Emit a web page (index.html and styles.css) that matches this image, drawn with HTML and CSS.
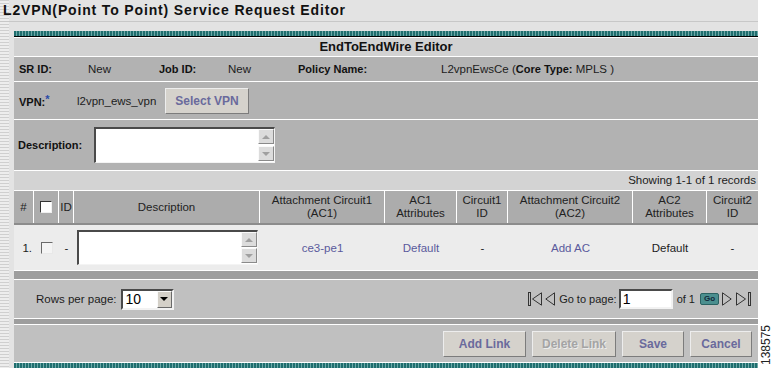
FILE: index.html
```html
<!DOCTYPE html>
<html lang="en">
<head>
    <meta charset="UTF-8">
    <title>L2VPN(Point To Point) Service Request Editor</title>
    <link rel="stylesheet" href="styles.css">
</head>
<body>
<div class="page">
    <div class="main">
        <h1 class="title">L2VPN(Point To Point) Service Request Editor</h1>

        <div class="panel">
            <div class="stripe top"></div>
            <div class="editor-head">EndToEndWire Editor</div>

            <div class="info-row">
                <b>SR ID:</b>
                <span>New</span>
                <b>Job ID:</b>
                <span>New</span>
                <b>Policy Name:</b>
                <span>L2vpnEwsCe (<b>Core Type:</b> MPLS )</span>
            </div>

            <div class="vpn-row">
                <b class="vpn-label">VPN:<sup>*</sup></b>
                <span class="vpn-value">l2vpn_ews_vpn</span>
                <button class="btn select-vpn">Select VPN</button>
            </div>

            <div class="desc-row">
                <b class="desc-label">Description:</b>
                <div class="scrollbox">
                    <div class="scroll-btns">
                        <span class="sb up"></span>
                        <span class="sb down"></span>
                    </div>
                </div>
            </div>

            <div class="showing">Showing 1-1 of 1 records</div>

            <div class="list-head">
                <div>#</div>
                <div><span class="cb head-cb"></span></div>
                <div>ID</div>
                <div>Description</div>
                <div>Attachment Circuit1<br>(AC1)</div>
                <div>AC1<br>Attributes</div>
                <div>Circuit1<br>ID</div>
                <div>Attachment Circuit2<br>(AC2)</div>
                <div>AC2<br>Attributes</div>
                <div>Circuit2<br>ID</div>
            </div>
            <div class="list-row">
                <div class="num">1.</div>
                <div><span class="cb"></span></div>
                <div>-</div>
                <div class="desc-cell">
                    <div class="scrollbox">
                        <div class="scroll-btns">
                            <span class="sb up"></span>
                            <span class="sb down"></span>
                        </div>
                    </div>
                </div>
                <div><a href="#">ce3-pe1</a></div>
                <div><a href="#">Default</a></div>
                <div>-</div>
                <div><a href="#">Add AC</a></div>
                <div>Default</div>
                <div>-</div>
            </div>

            <div class="band"></div>

            <div class="pager">
                <div class="rows-per-page">
                    <span>Rows per page:</span>
                    <div class="select">
                        <span class="select-val">10</span>
                        <span class="select-arrow"></span>
                    </div>
                </div>
                <div class="goto">
                    <svg class="nav" width="14" height="14" viewBox="0 0 14 14">
                        <rect x="0.5" y="0.5" width="2" height="13" fill="none" stroke="#333"/>
                        <path d="M13.5 0.8 L4.5 7 L13.5 13.2 Z" fill="none" stroke="#333"/>
                    </svg>
                    <svg class="nav prev" width="10" height="14" viewBox="0 0 10 14">
                        <path d="M9.5 0.8 L0.8 7 L9.5 13.2 Z" fill="none" stroke="#333"/>
                    </svg>
                    <span class="goto-label">Go to page:</span>
                    <span class="page-input">1</span>
                    <span class="of">of 1</span>
                    <span class="go">Go</span>
                    <svg class="nav" width="10" height="14" viewBox="0 0 10 14">
                        <path d="M0.5 0.8 L9.2 7 L0.5 13.2 Z" fill="none" stroke="#333"/>
                    </svg>
                    <svg class="nav last" width="16" height="14" viewBox="0 0 16 14">
                        <path d="M0.5 0.8 L9.5 7 L0.5 13.2 Z" fill="none" stroke="#333"/>
                        <rect x="12.5" y="0.5" width="2" height="13" fill="none" stroke="#333"/>
                    </svg>
                </div>
            </div>

            <div class="band thin"></div>

            <div class="actions">
                <button class="btn add-link">Add Link</button>
                <button class="btn delete-link" disabled>Delete Link</button>
                <button class="btn save">Save</button>
                <button class="btn cancel">Cancel</button>
            </div>

            <div class="stripe"></div>
        </div>
    </div>
    <div class="side"><span>138575</span></div>
</div>
</body>
</html>
```

FILE: styles.css
```css
* {
    margin: 0;
    padding: 0;
    box-sizing: border-box;
}

body {
    font-family: 'Liberation Sans', Arial, sans-serif;
    font-size: 11.5px;
    color: #1c1c1c;
    background: #fff;
}

.page {
    display: flex;
    width: 773px;
    height: 368px;
    overflow: hidden;
}

.main {
    width: 758px;
    background-color: #e3e3e3;
    background-image: repeating-linear-gradient(180deg, #cfcfcf 0 1px, #ededed 1px 3px);
    background-size: 9px 100%;
    background-repeat: no-repeat;
}

.title {
    height: 22px;
    padding: 3px 0 0 3px;
    border-bottom: 1px solid #c8c8c8;
    font-size: 14px;
    line-height: 15px;
    letter-spacing: 0.85px;
    color: #111;
}

.panel {
    width: 744px;
    margin: 9px 0 0 14px;
}

.stripe {
    height: 5px;
    background: repeating-linear-gradient(90deg, #1f6e6e 0 2px, #6ea8a8 2px 3px);
}

.stripe.top {
    height: 6px;
    border-bottom: 1px solid #000;
}

.editor-head {
    height: 20px;
    background: #d2d2d2;
    border-top: 1px solid #fff;
    border-bottom: 1px solid #fff;
    text-align: center;
    font-weight: bold;
    font-size: 13px;
    line-height: 18px;
    color: #111;
}

.info-row {
    display: grid;
    grid-template-columns: 69px 71px 69px 70px 143px 1fr;
    align-items: center;
    height: 25px;
    padding-left: 5px;
    background: #b2b2b2;
    border-bottom: 1px solid #fff;
}

.info-row b,
.vpn-label,
.desc-label {
    font-size: 11px;
    color: #111;
}

.vpn-row {
    display: flex;
    align-items: center;
    height: 38px;
    padding-left: 5px;
    background: #b2b2b2;
    border-bottom: 1px solid #fff;
}

.vpn-label {
    width: 58px;
}

.vpn-label sup {
    color: #2a4aa8;
    font-size: 11px;
    vertical-align: 3px;
}

.vpn-value {
    width: 88px;
}

.desc-row {
    display: flex;
    align-items: center;
    height: 51px;
    padding-left: 4px;
    background: #b2b2b2;
    border-bottom: 1px solid #fff;
}

.desc-label {
    width: 76px;
}

/* fake textarea with scroll arrows */
.scrollbox {
    display: flex;
    justify-content: flex-end;
    width: 181px;
    height: 36px;
    background: #fff;
    border-top: 2px solid #4a4a4a;
    border-left: 2px solid #4a4a4a;
    border-right: 1px solid #f4f4f4;
    border-bottom: 1px solid #f4f4f4;
}

.scroll-btns {
    display: flex;
    flex-direction: column;
    justify-content: space-between;
    width: 16px;
    padding: 0 0 1px 0;
}

.sb {
    display: flex;
    align-items: center;
    justify-content: center;
    height: 15px;
    background: #dcdcdc;
    border: 1px solid;
    border-color: #fafafa #8a8a8a #8a8a8a #fafafa;
}

.sb::after {
    content: '';
    border-left: 4px solid transparent;
    border-right: 4px solid transparent;
}

.sb.up::after {
    border-bottom: 4px solid #a0a0a0;
}

.sb.down::after {
    border-top: 4px solid #a0a0a0;
}

.showing {
    height: 20px;
    padding-right: 2px;
    background: #d3d3d3;
    border-bottom: 1px solid #fff;
    text-align: right;
    line-height: 19px;
}

.list-head,
.list-row {
    display: grid;
    grid-template-columns: 20px 25px 15px 186px 125px 72px 51px 125px 74px 51px;
}

.list-head {
    height: 34px;
    background: #acacac;
    border-bottom: 2px solid #8c8c8c;
}

.list-head > div {
    display: flex;
    align-items: center;
    justify-content: center;
    border-right: 1px solid #fff;
    text-align: center;
    line-height: 13px;
    color: #222;
}

.list-head > div:last-child {
    border-right: none;
}

.list-row {
    height: 46px;
    background: #ececec;
    border-bottom: 1px solid #fff;
}

.list-row > div {
    display: flex;
    align-items: center;
    justify-content: center;
}

.list-row .num {
    justify-content: flex-end;
    padding-right: 2px;
}

.list-row .desc-cell {
    justify-content: flex-start;
    padding-left: 3px;
}

.list-row .scrollbox {
    height: 35px;
}

.list-row a {
    color: #5a5a9c;
    text-decoration: none;
}

.cb {
    display: inline-block;
    width: 12px;
    height: 12px;
    background: #f4f4f4;
    border: 1px solid;
    border-color: #6a6a6a #e8e8e8 #e8e8e8 #6a6a6a;
}

.head-cb {
    background: #fff;
    border-color: #333 #f0f0f0 #f0f0f0 #333;
}

.band {
    height: 9px;
    background: #9e9e9e;
    border-bottom: 1px solid #fff;
}

.band.thin {
    height: 6px;
}

.pager {
    display: flex;
    align-items: center;
    justify-content: space-between;
    height: 39px;
    padding: 0 6px 0 22px;
    background: #c0c0c0;
    border-bottom: 1px solid #fff;
}

.rows-per-page,
.goto {
    display: flex;
    align-items: center;
}

.rows-per-page span:first-child {
    margin-right: 4px;
}

.select {
    display: flex;
    width: 53px;
    height: 21px;
    background: #fff;
    border: 2px solid;
    border-color: #4a4a4a #f2f2f2 #f2f2f2 #4a4a4a;
}

.select-val {
    flex: 1;
    padding-left: 3px;
    font-size: 14px;
    line-height: 17px;
    color: #000;
}

.select-arrow {
    display: flex;
    align-items: center;
    justify-content: center;
    width: 15px;
    background: #d4d0c8;
    border: 1px solid;
    border-color: #fafafa #6a6a6a #6a6a6a #fafafa;
}

.select-arrow::after {
    content: '';
    border-left: 4px solid transparent;
    border-right: 4px solid transparent;
    border-top: 4px solid #000;
}

.nav.prev {
    margin: 0 4px 0 3px;
}

.nav.last {
    margin-left: 4px;
}

.goto-label,
.of {
    font-size: 11px;
}

.goto-label {
    margin-right: 2px;
}

.page-input {
    width: 54px;
    height: 20px;
    padding-left: 2px;
    background: #fff;
    border: 2px solid;
    border-color: #4a4a4a #f2f2f2 #f2f2f2 #4a4a4a;
    font-size: 14px;
    line-height: 16px;
    color: #000;
}

.of {
    margin: 0 5px 0 4px;
}

.go {
    width: 19px;
    height: 12px;
    margin-right: 3px;
    background: #4b8f8f;
    border: 1px solid #2b6262;
    border-radius: 2px;
    font-size: 8px;
    font-weight: bold;
    line-height: 10px;
    text-align: center;
    color: #10283a;
}

.actions {
    display: flex;
    align-items: center;
    justify-content: flex-end;
    gap: 6px;
    height: 38px;
    padding-right: 6px;
    background: #c0c0c0;
    border-bottom: 1px solid #fff;
}

.btn {
    height: 26px;
    background: #d5d2cc;
    border: 1px solid;
    border-color: #ededed #7c7c7c #7c7c7c #ededed;
    font-family: 'Liberation Sans', Arial, sans-serif;
    font-size: 12px;
    font-weight: bold;
    color: #6a6a9c;
}

.select-vpn {
    width: 84px;
}

.add-link {
    width: 83px;
}

.delete-link {
    width: 84px;
    color: #a4a4a4;
    text-shadow: 1px 1px 0 #ececec;
}

.save,
.cancel {
    width: 62px;
}

.side {
    display: flex;
    align-items: flex-end;
    justify-content: center;
    width: 15px;
    padding-bottom: 3px;
    background: #fff;
}

.side span {
    writing-mode: vertical-rl;
    transform: rotate(180deg);
    font-size: 12px;
    color: #222;
}
```
